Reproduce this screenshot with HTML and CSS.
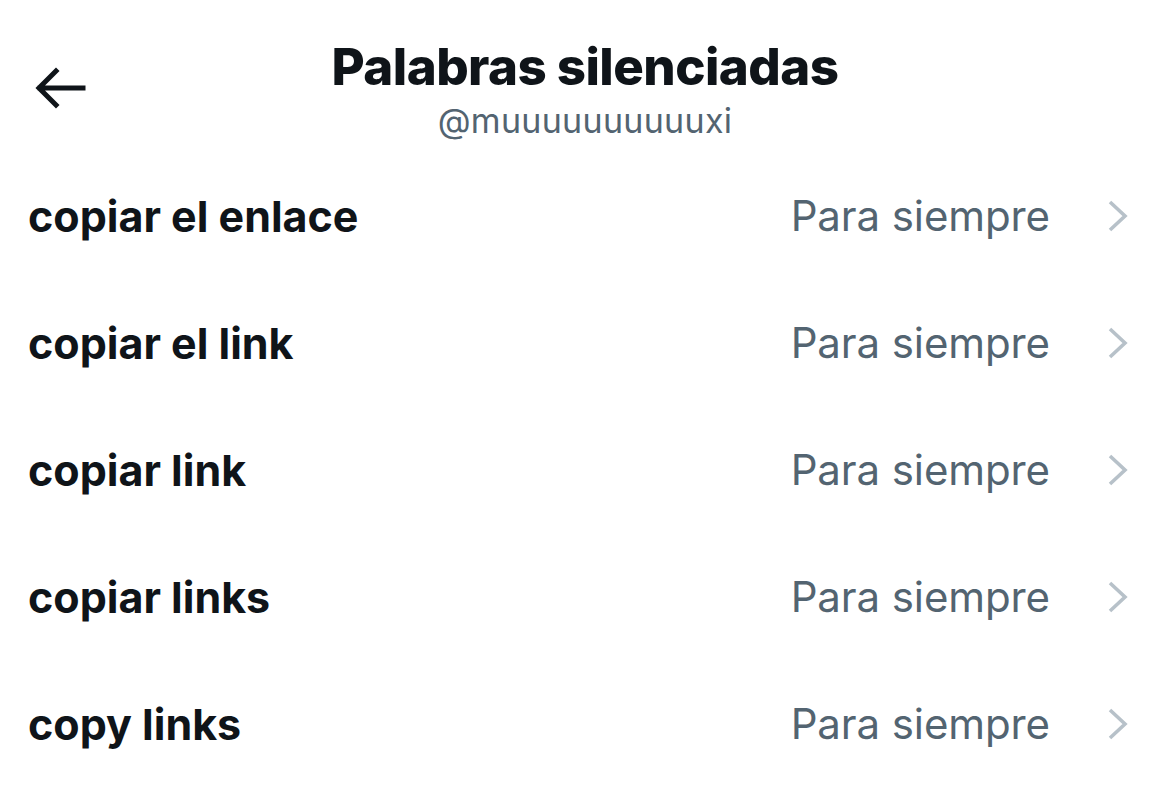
FILE: index.html
```html
<!DOCTYPE html>
<html lang="es">
<head>
<meta charset="utf-8">
<link rel="stylesheet" href="styles.css">
</head>
<body>
<header class="header">
  <button class="back" aria-label="Atrás">
    <svg width="52" height="44" viewBox="0 0 52 44"><path d="M49 22H6M22 5L5 22l17 17" fill="none" stroke="#0f1419" stroke-width="5" stroke-linecap="square"/></svg>
  </button>
  <div class="titles">
    <h1 class="title">Palabras silenciadas</h1>
    <div class="handle">@muuuuuuuuuuxi</div>
  </div>
</header>
<ul class="list">
  <li class="row"><span class="word">copiar el enlace</span><span class="dur">Para siempre</span><svg class="chev" width="22" height="34" viewBox="0 0 22 34"><path d="M3 3l15 14L3 31" fill="none" stroke="#b7c1c9" stroke-width="3.6"/></svg></li>
  <li class="row"><span class="word">copiar el link</span><span class="dur">Para siempre</span><svg class="chev" width="22" height="34" viewBox="0 0 22 34"><path d="M3 3l15 14L3 31" fill="none" stroke="#b7c1c9" stroke-width="3.6"/></svg></li>
  <li class="row"><span class="word">copiar link</span><span class="dur">Para siempre</span><svg class="chev" width="22" height="34" viewBox="0 0 22 34"><path d="M3 3l15 14L3 31" fill="none" stroke="#b7c1c9" stroke-width="3.6"/></svg></li>
  <li class="row"><span class="word">copiar links</span><span class="dur">Para siempre</span><svg class="chev" width="22" height="34" viewBox="0 0 22 34"><path d="M3 3l15 14L3 31" fill="none" stroke="#b7c1c9" stroke-width="3.6"/></svg></li>
  <li class="row"><span class="word">copy links</span><span class="dur">Para siempre</span><svg class="chev" width="22" height="34" viewBox="0 0 22 34"><path d="M3 3l15 14L3 31" fill="none" stroke="#b7c1c9" stroke-width="3.6"/></svg></li>
</ul>
</body>
</html>
```
FILE: styles.css
```css
* { box-sizing: border-box; }
html, body { margin: 0; padding: 0; background: #fff; }
body { font-family: Inter, "Liberation Sans", sans-serif; color: #0f1419; width: 1170px; height: 788px; overflow: hidden; }
.header { position: relative; height: 152px; display: flex; justify-content: center; }
.back { position: absolute; left: 34px; top: 66px; background: none; border: 0; padding: 0; display: flex; }
.titles { display: flex; flex-direction: column; align-items: center; padding-top: 37px; }
.title { margin: 0; font-size: 51px; font-weight: 800; line-height: 60px; letter-spacing: -0.55px; white-space: nowrap; }
.handle { font-size: 34px; line-height: 40px; color: #536471; margin-top: 4px; letter-spacing: 0.3px; }
.list { list-style: none; margin: 0; padding: 0; }
.row { height: 127px; display: flex; align-items: center; padding: 0 41px 0 28px; }
.word { flex: 1; font-size: 43px; font-weight: 700; letter-spacing: 0; }
.dur { font-size: 42px; color: #536471; letter-spacing: -0.1px; }
.chev { margin-left: 57px; }
```
